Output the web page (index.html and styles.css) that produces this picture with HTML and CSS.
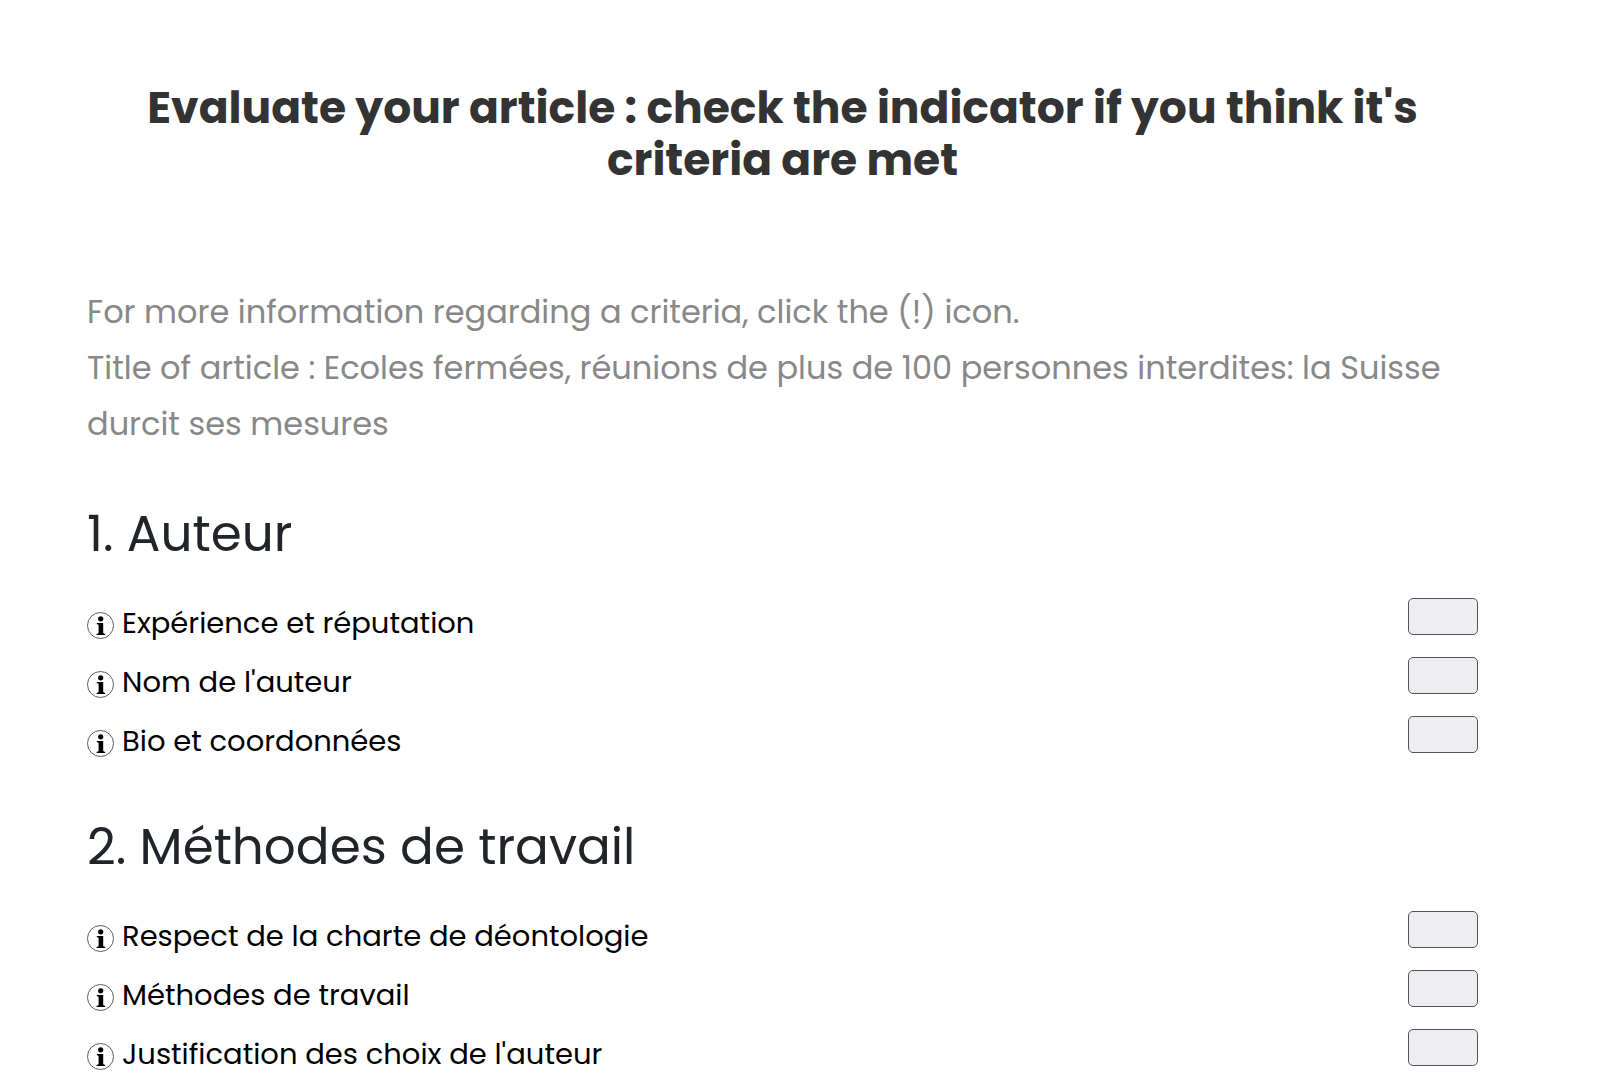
FILE: index.html
```html
<!DOCTYPE html>
<html lang="en">
<head>
<meta charset="utf-8">
<meta name="viewport" content="width=device-width, initial-scale=1">
<title>Evaluate your article</title>
<link rel="stylesheet" href="styles.css">
</head>
<body>
<svg class="sprite" aria-hidden="true">
  <symbol id="info" viewBox="0 0 27 27">
    <circle cx="13.5" cy="13.5" r="13" fill="none" stroke="#333" stroke-width="0.8"/>
    <circle cx="13.7" cy="6.8" r="2.6"/>
    <path d="M9.800 11h6.400v9.600q0 1 1 1.200h1v1.200H9.600v-1.200h1q1-.2 1-1.200v-7.200q0-1-1-1.200h-.8z"/>
  </symbol>
</svg>
<main class="page">
  <h1 class="title">Evaluate your article : check the indicator if you think it's criteria are met</h1>
  <p class="intro">For more information regarding a criteria, click the (!) icon.<br>Title of article : Ecoles fermées, réunions de plus de 100 personnes interdites: la Suisse durcit ses mesures</p>
  <form>
    <section class="group" lang="fr">
      <h2 class="group-title">1. Auteur</h2>
      <ul class="criteria">
        <li class="criterion"><button class="info" type="button" aria-label="Information"><svg class="icon"><use href="#info"/></svg></button><label class="name" for="c1">Expérience et réputation</label><input class="check" type="checkbox" id="c1"></li>
        <li class="criterion"><button class="info" type="button" aria-label="Information"><svg class="icon"><use href="#info"/></svg></button><label class="name" for="c2">Nom de l'auteur</label><input class="check" type="checkbox" id="c2"></li>
        <li class="criterion"><button class="info" type="button" aria-label="Information"><svg class="icon"><use href="#info"/></svg></button><label class="name" for="c3">Bio et coordonnées</label><input class="check" type="checkbox" id="c3"></li>
      </ul>
    </section>
    <section class="group" lang="fr">
      <h2 class="group-title">2. Méthodes de travail</h2>
      <ul class="criteria">
        <li class="criterion"><button class="info" type="button" aria-label="Information"><svg class="icon"><use href="#info"/></svg></button><label class="name" for="c4">Respect de la charte de déontologie</label><input class="check" type="checkbox" id="c4"></li>
        <li class="criterion"><button class="info" type="button" aria-label="Information"><svg class="icon"><use href="#info"/></svg></button><label class="name" for="c5">Méthodes de travail</label><input class="check" type="checkbox" id="c5"></li>
        <li class="criterion"><button class="info" type="button" aria-label="Information"><svg class="icon"><use href="#info"/></svg></button><label class="name" for="c6">Justification des choix de l'auteur</label><input class="check" type="checkbox" id="c6"></li>
      </ul>
    </section>
  </form>
</main>
</body>
</html>
```
FILE: styles.css
```css
* {
  box-sizing: border-box;
}

body {
  margin: 0;
  background: #fff;
  color: #000;
  font-family: Poppins, Inter, sans-serif;
}

.sprite {
  display: none;
}

.page {
  padding: 82px 144px 0 87px;
}

.title {
  margin: 0 0 98px;
  color: #333;
  font-size: 44px;
  line-height: 52px;
  font-weight: 700;
  text-align: center;
}

.intro {
  margin: 0 0 52px;
  color: #888;
  font-size: 32px;
  line-height: 56px;
}

.group-title {
  margin: 0 0 34px;
  color: #212529;
  font-size: 50px;
  line-height: 60px;
  font-weight: 400;
}

.group + .group {
  margin-top: 58px;
}

.criteria {
  display: grid;
  gap: 16px;
  margin: 0;
  padding: 0;
  list-style: none;
}

.criterion {
  display: flex;
  align-items: flex-start;
  gap: 8px;
}

.info {
  margin: 0;
  padding: 14px 0 0;
  border: 0;
  background: none;
  cursor: pointer;
}

.icon {
  display: block;
  width: 27px;
  height: 27px;
}

.name {
  flex: 1;
  padding-top: 7px;
  font-size: 29px;
  line-height: 36px;
}

.check {
  appearance: none;
  width: 70px;
  height: 37px;
  margin: 0;
  border: 1px solid #555;
  border-radius: 5px;
  background: #eeedf2;
}

.check:checked {
  background: #555;
}
```
